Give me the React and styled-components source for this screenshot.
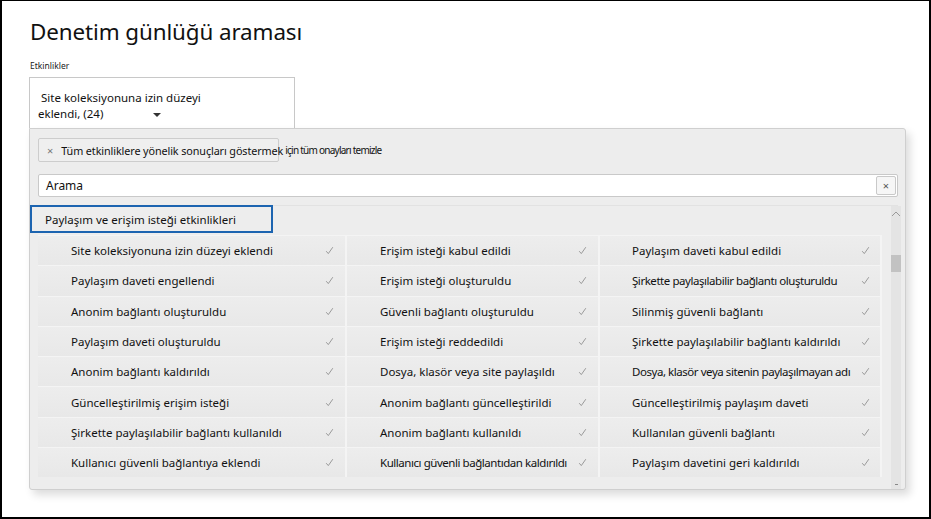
import React from "react";
import styled, { createGlobalStyle } from "styled-components";

const GlobalStyle = createGlobalStyle`
  html, body { margin: 0; padding: 0; background: #ffffff; }
  body { font-family: "Segoe UI", "Noto Sans", "Open Sans", sans-serif; color: #111; }
  * { box-sizing: border-box; }
`;

const Frame = styled.div`
  width: 931px;
  height: 519px;
  border-style: solid;
  border-color: #000;
  border-width: 1px 2px 2px 2px;
  padding: 14px 0 0 27px;
  overflow: hidden;
  background: #fff;
`;

const Title = styled.h1`
  margin: 0 0 0 1px;
  font-size: 22.4px;
  font-weight: 400;
  line-height: 34px;
  letter-spacing: -0.1px;
  color: #111;
`;

const FieldLabel = styled.div`
  margin: 11px 0 0 1px;
  font-size: 8.5px;
  line-height: 12px;
  color: #222;
`;

const Dropdown = styled.div`
  margin-top: 5px;
  width: 266px;
  height: 51px;
  background: #fff;
  border: 1px solid #c8c8c8;
  border-bottom: none;
  padding: 12px 0 0 8px;
  font-size: 11.5px;
  line-height: 16px;
  color: #111;
`;

const DropLine = styled.div`
  padding-left: ${(p) => (p.$indent ? "3px" : "0")};
  display: flex;
  align-items: center;
`;

const Caret = styled.svg`
  margin-left: 50px;
  margin-top: 1px;
`;

const Panel = styled.div`
  width: 877px;
  height: 362px;
  background: #ededed;
  border: 1px solid #cfcfcf;
  border-radius: 0 3px 3px 3px;
  box-shadow: 4px 5px 9px rgba(0, 0, 0, 0.14);
  padding: 9px 7px 0 0;
  display: flex;
  flex-direction: column;
`;

const ChipRow = styled.div`
  padding-left: 8px;
  height: 24px;
  display: flex;
`;

const Chip = styled.div`
  width: 241px;
  height: 24px;
  border: 1px solid #cdcdcd;
  border-radius: 2px;
  background: #efefef;
  display: flex;
  align-items: center;
  padding-left: 8px;
  font-size: 10.8px;
  letter-spacing: -0.1px;
  color: #111;
  white-space: nowrap;
`;

const ChipX = styled.span`
  color: #777;
  font-size: 11px;
  margin-right: 8px;
`;

const Overflow = styled.span`
  letter-spacing: -0.75px;
  font-size: 10px;
  margin-left: 2px;
`;

const SearchBox = styled.div`
  margin: 12px 0 0 8px;
  height: 23px;
  background: #fff;
  border: 1px solid #c9c9c9;
  border-radius: 2px;
  display: flex;
  align-items: center;
  justify-content: space-between;
  padding-left: 7px;
  font-size: 12px;
  color: #111;
`;

const ClearBtn = styled.div`
  width: 20px;
  height: 19px;
  margin-right: 1px;
  border: 1px solid #c9c9c9;
  border-radius: 2px;
  background: #f6f6f6;
  display: flex;
  align-items: center;
  justify-content: center;
  color: #555;
  font-size: 11px;
`;

const ListArea = styled.div`
  margin-top: 8px;
  flex: 1;
  display: flex;
  border-top: 1px solid #e2e2e2;
  min-height: 0;
`;

const ListBody = styled.div`
  flex: 1;
  display: flex;
  flex-direction: column;
`;

const GroupHeader = styled.div`
  margin-top: -1px;
  width: 243px;
  height: 28px;
  border: 2px solid #1c64b0;
  display: flex;
  align-items: center;
  padding-left: 13px;
  font-size: 11.5px;
  color: #111;
`;

const Grid = styled.div`
  margin: 2px 0 0 8px;
  display: grid;
  grid-template-columns: 309px 253px 282px;
  grid-auto-rows: 30.3px;
`;

const Cell = styled.div`
  display: flex;
  align-items: center;
  justify-content: space-between;
  padding: 0 ${(p) => p.$pr}px 0 ${(p) => p.$pl}px;
  background: linear-gradient(#ededed, #e8e8e8);
  border-top: 1px solid #f4f4f4;
  border-right: 2px solid #f4f4f4;
  font-size: 11.5px;
  color: #111;
  white-space: nowrap;
`;

const CellText = styled.span`
  letter-spacing: ${(p) => (p.$tight ? -0.45 : 0)}px;
`;

const CheckMark = styled.svg`
  flex-shrink: 0;
  margin-left: 3px;
`;

const Scrollbar = styled.div`
  width: 15px;
  margin-left: 9px;
  background: #e4e4e4;
  display: flex;
  flex-direction: column;
  align-items: center;
  position: relative;
`;

const Thumb = styled.div`
  position: absolute;
  top: 49px;
  left: 0;
  right: 0;
  height: 17px;
  background: #c2c2c2;
`;

const ArrowUp = styled.svg`
  margin-top: 5px;
`;

const BottomDash = styled.div`
  margin-top: auto;
  margin-bottom: 4px;
  width: 3px;
  height: 1px;
  background: #888;
`;

const Check = () => (
  <CheckMark width="9" height="9" viewBox="0 0 9 9">
    <path d="M1.2 5.2 L3.3 7.6 L7.8 1.2" fill="none" stroke="#9a9a9a" strokeWidth="1" />
  </CheckMark>
);

const cols = [
  { pl: 33, pr: 11 },
  { pl: 33, pr: 11 },
  { pl: 32, pr: 10 },
];

const TIGHT = new Set([
  "Kullanıcı güvenli bağlantıdan kaldırıldı",
  "Dosya, klasör veya sitenin paylaşılmayan adı",
  "Şirkette paylaşılabilir bağlantı oluşturuldu",
]);

const rows = [
  ["Site koleksiyonuna izin düzeyi eklendi", "Erişim isteği kabul edildi", "Paylaşım daveti kabul edildi"],
  ["Paylaşım daveti engellendi", "Erişim isteği oluşturuldu", "Şirkette paylaşılabilir bağlantı oluşturuldu"],
  ["Anonim bağlantı oluşturuldu", "Güvenli bağlantı oluşturuldu", "Silinmiş güvenli bağlantı"],
  ["Paylaşım daveti oluşturuldu", "Erişim isteği reddedildi", "Şirkette paylaşılabilir bağlantı kaldırıldı"],
  ["Anonim bağlantı kaldırıldı", "Dosya, klasör veya site paylaşıldı", "Dosya, klasör veya sitenin paylaşılmayan adı"],
  ["Güncelleştirilmiş erişim isteği", "Anonim bağlantı güncelleştirildi", "Güncelleştirilmiş paylaşım daveti"],
  ["Şirkette paylaşılabilir bağlantı kullanıldı", "Anonim bağlantı kullanıldı", "Kullanılan güvenli bağlantı"],
  ["Kullanıcı güvenli bağlantıya eklendi", "Kullanıcı güvenli bağlantıdan kaldırıldı", "Paylaşım davetini geri kaldırıldı"],
];

export default function App() {
  return (
    <>
      <GlobalStyle />
      <Frame>
        <Title>Denetim günlüğü araması</Title>
        <FieldLabel>Etkinlikler</FieldLabel>
        <Dropdown>
          <DropLine $indent>Site koleksiyonuna izin düzeyi</DropLine>
          <DropLine>
            eklendi, (24)
            <Caret width="8" height="4" viewBox="0 0 8 4">
              <path d="M0 0 L8 0 L4 4 Z" fill="#333" />
            </Caret>
          </DropLine>
        </Dropdown>
        <Panel>
          <ChipRow>
            <Chip>
              <ChipX>×</ChipX>
              Tüm etkinliklere yönelik sonuçları göstermek
              <Overflow>için tüm onayları temizle</Overflow>
            </Chip>
          </ChipRow>
          <SearchBox>
            Arama
            <ClearBtn>×</ClearBtn>
          </SearchBox>
          <ListArea>
            <ListBody>
              <GroupHeader>Paylaşım ve erişim isteği etkinlikleri</GroupHeader>
              <Grid>
                {rows.map((r, i) =>
                  r.map((t, j) => (
                    <Cell key={`${i}-${j}`} $pl={cols[j].pl} $pr={cols[j].pr}>
                      <CellText $tight={TIGHT.has(t)}>{t}</CellText>
                      <Check />
                    </Cell>
                  ))
                )}
              </Grid>
            </ListBody>
            <Scrollbar>
              <ArrowUp width="10" height="6" viewBox="0 0 10 6">
                <path d="M1 5 L5 1 L9 5" fill="none" stroke="#999" strokeWidth="1" />
              </ArrowUp>
              <Thumb />
              <BottomDash />
            </Scrollbar>
          </ListArea>
        </Panel>
      </Frame>
    </>
  );
}
